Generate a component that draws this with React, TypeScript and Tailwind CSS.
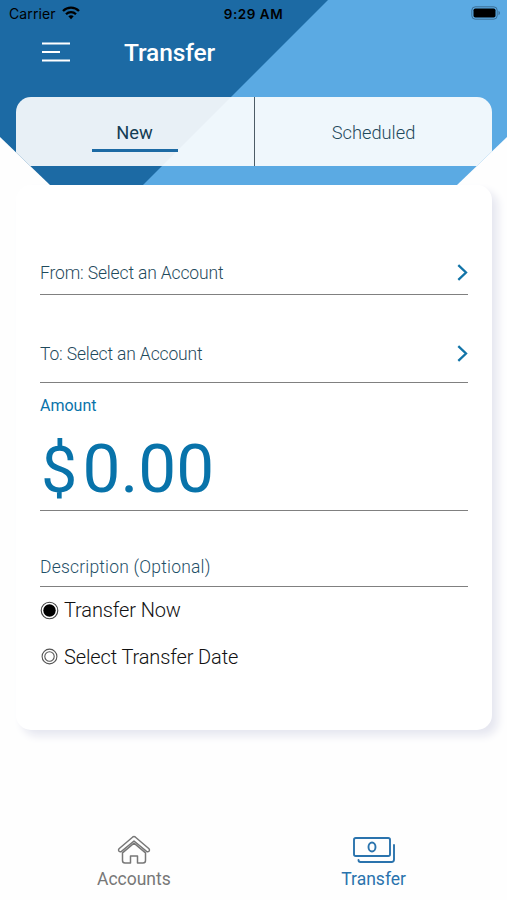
import type { ReactNode } from "react";
import { clsx } from "clsx";

function StatusBar() {
  return (
    <div className="grid h-7 grid-cols-[1fr_auto_1fr] items-center pl-[9px] pr-[6px] text-black">
      <div className="flex items-center gap-[6px]">
        <span className="text-[14px] leading-7 font-['Inter','Roboto',sans-serif] tracking-[0.1px]">
          Carrier
        </span>
        <svg className="-mt-[2px]" width="18" height="14" viewBox="0 0 18 14" fill="none" stroke="currentColor" strokeWidth="2.3">
          <path d="M1 5C5.5 .6 12.500 .6 17 5" />
          <path d="M4 8.200C6.800 5.400 11.200 5.400 14 8.200" />
          <path d="M9 13.200L6.300 10.300Q9 8.200 11.700 10.300Z" fill="currentColor" stroke="none" />
        </svg>
      </div>
      <span className="pr-[3px] text-[13.500px] leading-7 font-semibold tracking-[0.55px] font-['Inter','Roboto',sans-serif]">
        9:29 AM
      </span>
      <svg className="-mt-[2px] justify-self-end" width="30" height="14" viewBox="0 0 30 14">
        <rect x=".8" y=".8" width="25.400" height="12.400" rx="3.500" fill="none" stroke="#2d5675" strokeOpacity=".7" />
        <rect x="2.500" y="2.500" width="22" height="9" rx="1.800" fill="#000" />
        <path d="M27.500 4.800v4.400c2-.8 2-3.600 0-4.400z" fill="#2d5675" fillOpacity=".7" />
      </svg>
    </div>
  );
}

function AccountRow({ label, className }: { label: string; className?: string }) {
  return (
    <button
      className={clsx(
        "flex w-full items-start justify-between border-b-[1.500px] border-[#808080] text-left text-[17.500px] leading-6 font-light tracking-[-0.15px] text-[#1f4a5c]",
        className
      )}
    >
      <span>{label}</span>
      <svg className="mt-[3px]" width="11" height="17" viewBox="0 0 11 17" fill="none" stroke="#1274a8" strokeWidth="2.300">
        <path d="M1.300 1.200L9 8.500L1.300 15.800" />
      </svg>
    </button>
  );
}

function RadioRow({ label, checked }: { label: string; checked?: boolean }) {
  return (
    <label className="flex h-[46.500px] items-center gap-[5px] text-[20px] font-light tracking-[-0.12px] text-[#111]">
      <svg width="19" height="19" viewBox="0 0 19 19" fill="none">
        <circle cx="9.500" cy="9.500" r={checked ? 8.3 : 7.4} stroke={checked ? "#444" : "#555"} strokeWidth="1.100" />
        {checked ? (
          <circle cx="9.500" cy="9.500" r="6.200" fill="#000" />
        ) : (
          <circle cx="9.500" cy="9.500" r="4.700" stroke="#555" strokeWidth="1.100" />
        )}
      </svg>
      <span>{label}</span>
    </label>
  );
}

function NavItem({ label, icon, className }: { label: string; icon: ReactNode; className?: string }) {
  return (
    <button className={clsx("flex flex-col items-center", className)}>
      {icon}
      <span className="mt-[2px] text-[17.500px] leading-6">{label}</span>
    </button>
  );
}

export default function App() {
  return (
    <div className="flex h-[900px] w-[507px] flex-col overflow-hidden bg-[#fefefe] font-['Roboto',sans-serif]">
      <header className="h-[185px] bg-[linear-gradient(135deg,#1c6aa4_47.300%,#5baae3_47.500%)] [clip-path:polygon(0_0,100%_0,100%_137px,457px_100%,50px_100%,0_137px)]">
        <StatusBar />
        <div className="flex h-[69px] items-start pl-[42px] text-white">
          <svg className="mt-[14px]" width="28" height="20" viewBox="0 0 28 20" stroke="#fff" strokeWidth="1.900">
            <path d="M0 1.500h28M0 10h18M0 18.500h28" />
          </svg>
          <h1 className="mt-[9px] ml-[54px] text-[24.500px] leading-8 font-medium tracking-[-0.1px]">
            Transfer
          </h1>
        </div>
        <div className="mr-[15px] ml-4 flex h-[69px] overflow-hidden rounded-t-[15px] bg-white/90 text-[18.300px]">
          <button className="flex w-[239px] flex-col items-center border-r border-[#4c5c66] pt-[24px] pr-[1px] text-[#143d54]">
            <span className="leading-6">New</span>
            <span className="mt-[4px] h-[2.500px] w-[86px] bg-[#1c6aa4]" />
          </button>
          <button className="flex flex-1 justify-center pt-[24px] leading-6 font-light text-[#1f4a5c]">
            Scheduled
          </button>
        </div>
      </header>

      <main className="mr-[15px] ml-4 h-[545px] rounded-[15px] bg-white px-6 pt-[76px] shadow-[6px_6px_8px_#e6e7f0]">
        <AccountRow label="From: Select an Account" className="h-[34px]" />
        <AccountRow label="To: Select an Account" className="mt-[47px] h-[41px]" />
        <div className="h-[128px] border-b-[1.500px] border-[#808080] pt-[11px] text-[#0873aa]">
          <div className="text-[16px] leading-6">Amount</div>
          <div className="mt-[11px] flex items-baseline text-[67.500px] leading-[80px]">
            <span className="w-[42.500px] pl-px text-[64.500px]">$</span>
            <span>0.00</span>
          </div>
        </div>
        <div className="h-[76px] border-b-[1.500px] border-[#808080] pt-[44px] text-[17.500px] leading-6 font-light tracking-[0.19px] text-[#1f5068]">
          Description (Optional)
        </div>
        <RadioRow label="Transfer Now" checked />
        <RadioRow label="Select Transfer Date" />
      </main>

      <nav className="mt-[105px] flex justify-between pr-[101px] pl-[97px]">
        <NavItem
          label="Accounts"
          className="text-[#777]"
          icon={
            <svg width="34" height="30" viewBox="0 0 34 30" fill="none" stroke="currentColor" strokeWidth="1.500" strokeLinejoin="round">
              <path d="M15.500 2.200Q17 1 18.500 2.200L32 13.800Q33 15 32 16.200Q30.800 17.300 29.500 16.400L17 6L4.500 16.400Q3.200 17.300 2 16.200Q1 15 2 13.800Z" />
              <path d="M5.500 17.800L17 8.200L28.500 17.800V25.500Q28.500 28 26 28H20.500V21H13.500V28H8Q5.500 28 5.500 25.500Z" />
            </svg>
          }
        />
        <NavItem
          label="Transfer"
          className="text-[#2a73ad]"
          icon={
            <svg width="44" height="30" viewBox="0 0 44 30" fill="none" stroke="currentColor" strokeWidth="1.900" strokeLinecap="round">
              <rect x="2" y="3" width="36" height="18" rx="1.800" />
              <ellipse cx="20" cy="12" rx="3.500" ry="4.500" />
              <path d="M42 10V24.500Q42 27 39.500 27H8.500Q6.500 27 6.500 25" />
            </svg>
          }
        />
      </nav>
    </div>
  );
}
